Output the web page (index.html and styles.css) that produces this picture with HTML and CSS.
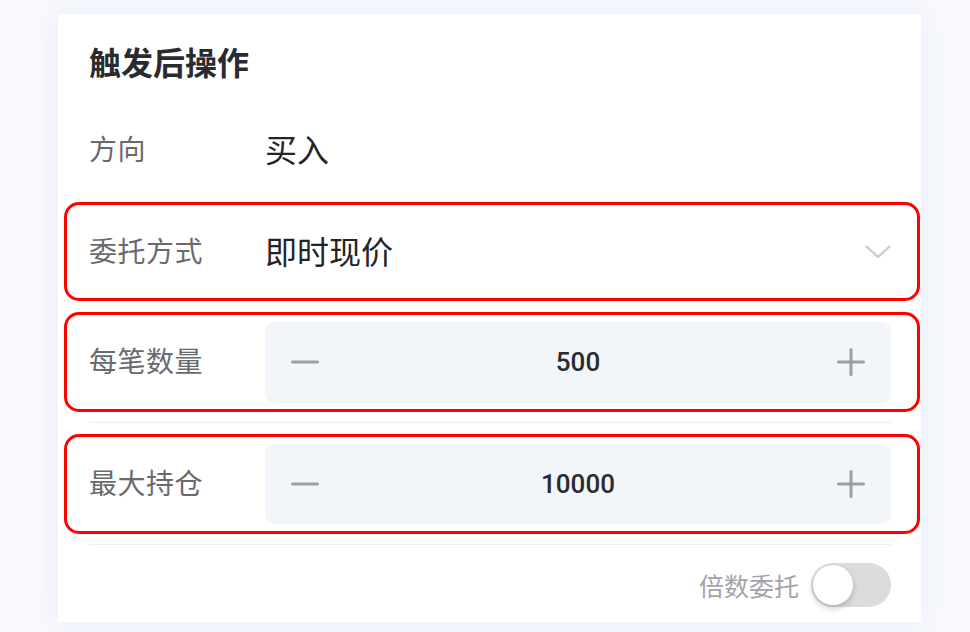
FILE: index.html
```html
<!DOCTYPE html>
<html lang="zh-CN">
<head>
<meta charset="utf-8">
<title>触发后操作</title>
<link rel="stylesheet" href="styles.css">
</head>
<body>
<div class="page">
  <section class="card">
    <h2 class="title">触发后操作</h2>

    <div class="row plain">
      <span class="label">方向</span>
      <span class="value">买入</span>
    </div>

    <div class="row boxed first">
      <span class="label">委托方式</span>
      <span class="value grow">即时现价</span>
      <svg class="chevron" width="26" height="14" viewBox="0 0 26 14"><path d="M1.5 1.5 L13 12 L24.5 1.5" fill="none" stroke="#cbcbcf" stroke-width="2.2" stroke-linecap="round" stroke-linejoin="round"/></svg>
    </div>

    <div class="row boxed second">
      <span class="label">每笔数量</span>
      <div class="stepper">
        <svg class="step-icon" width="28" height="28" viewBox="0 0 28 28"><path d="M1.5 14 H26.5" stroke="#9c9ea6" stroke-width="3" stroke-linecap="round"/></svg>
        <span class="num">500</span>
        <svg class="step-icon" width="28" height="28" viewBox="0 0 28 28"><path d="M1.5 14 H26.5 M14 1.5 V26.5" stroke="#9c9ea6" stroke-width="3" stroke-linecap="round"/></svg>
      </div>
    </div>

    <div class="divider"></div>

    <div class="row boxed third">
      <span class="label">最大持仓</span>
      <div class="stepper">
        <svg class="step-icon" width="28" height="28" viewBox="0 0 28 28"><path d="M1.5 14 H26.5" stroke="#9c9ea6" stroke-width="3" stroke-linecap="round"/></svg>
        <span class="num">10000</span>
        <svg class="step-icon" width="28" height="28" viewBox="0 0 28 28"><path d="M1.5 14 H26.5 M14 1.5 V26.5" stroke="#9c9ea6" stroke-width="3" stroke-linecap="round"/></svg>
      </div>
    </div>

    <div class="divider"></div>

    <div class="toggle-row">
      <span class="toggle-label">倍数委托</span>
      <span class="switch"><span class="knob"></span></span>
    </div>
  </section>
</div>
</body>
</html>
```

FILE: styles.css
```css
* { box-sizing: border-box; }

html, body {
  margin: 0;
  padding: 0;
  background: #f8f9fe;
  font-family: "Noto Sans CJK SC", "Noto Sans", sans-serif;
}

.page {
  padding: 14px 49px 0 58px;
  height: 632px;
  overflow: hidden;
}

.card {
  background: #ffffff;
  height: 608px;
  padding: 25px 30px 0 31px;
  box-shadow: 0 0 24px rgba(210, 214, 245, 0.35);
}

.title {
  margin: 0;
  font-size: 32px;
  line-height: 44px;
  font-weight: 700;
  color: #2a2b30;
}

.row {
  display: flex;
  align-items: center;
}

.row.plain {
  height: 104px;
  margin-top: 15px;
}

.label {
  width: 176px;
  flex: none;
  font-size: 28px;
  color: #686a70;
  letter-spacing: 0.5px;
  padding-bottom: 4px;
}

.value {
  font-size: 32px;
  color: #232428;
  padding-bottom: 4px;
}

.grow { flex: 1; }

.boxed {
  height: 100px;
  margin-left: -25px;
  margin-right: -29px;
  padding: 0 26px 0 22px;
  border: 3px solid #ff0000;
  border-radius: 15px;
}

.boxed.first { height: 99px; }
.boxed.second { margin-top: 11px; }

.chevron { flex: none; }

.stepper {
  flex: 1;
  height: 81px;
  background: #f2f5f9;
  border-radius: 9px;
  display: flex;
  align-items: center;
  justify-content: space-between;
  padding: 0 26px 0 26px;
}

.third .stepper { height: 80px; }

.num {
  font-family: Roboto, "Noto Sans", sans-serif;
  font-weight: 500;
  font-size: 26px;
  color: #2a2b30;
}

.step-icon { flex: none; }

.divider {
  height: 1px;
  background: #ecedf1;
  margin: 10px 0 11px;
}

.third + .divider { margin: 10px 0 0; }

.toggle-row {
  display: flex;
  justify-content: flex-end;
  align-items: flex-start;
  padding-top: 18px;
}

.toggle-label {
  font-size: 25px;
  line-height: 44px;
  color: #a2a4a9;
  margin-right: 12px;
  padding-bottom: 4px;
}

.switch {
  width: 80px;
  height: 44px;
  border-radius: 22px;
  background: #dcdcde;
  display: flex;
  align-items: center;
  padding-left: 2px;
}

.knob {
  width: 40px;
  height: 40px;
  border-radius: 50%;
  background: #ffffff;
  box-shadow: 0 3px 6px rgba(0, 0, 0, 0.22);
}
```
